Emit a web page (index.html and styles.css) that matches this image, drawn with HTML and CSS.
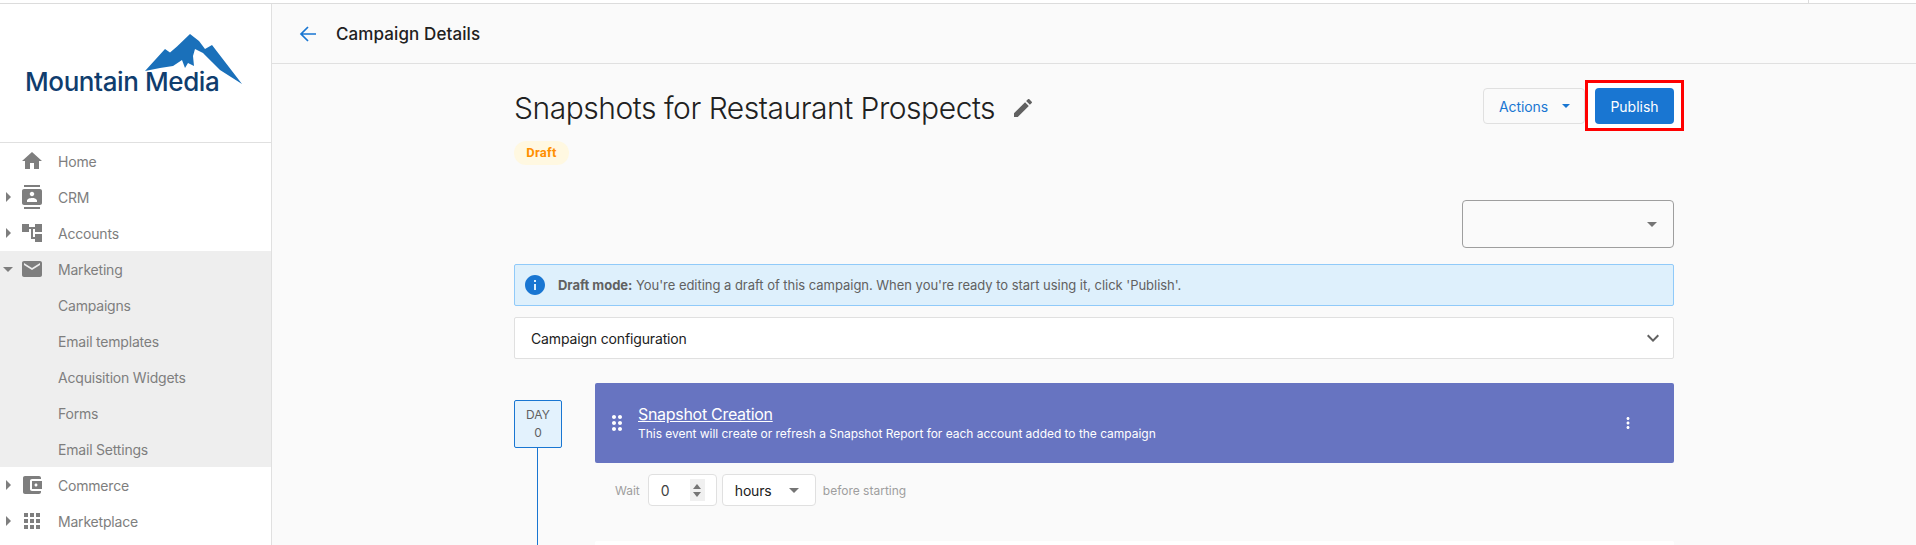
FILE: index.html
```html
<!DOCTYPE html>
<html lang="en">
<head>
<meta charset="utf-8">
<title>Campaign Details</title>
<link rel="stylesheet" href="styles.css">
</head>
<body>
<div class="topstrip"><span class="tick"></span></div>
<div class="shell">
  <aside class="sidebar">
    <div class="logo">
      <span class="logo-text">Mountain Media</span>
      <svg class="logo-mark" viewBox="0 0 97 50" aria-hidden="true"><path d="M0 37 20 15l5 3.500 7-6L45 0l9 7 6 8 7-4 10 13 20 26-22-14-8-8-9-9-8-4-2 7 1 10-6-3-3 5-3-8-9 6-13 2z"/></svg>
    </div>
    <nav class="nav">
      <a class="nav-item"><span class="caret none"></span><svg class="ic" viewBox="0 0 24 24"><path d="M10 20v-6h4v6h5v-8h3L12 3 2 12h3v8z"/></svg><span>Home</span></a>
      <a class="nav-item"><span class="caret"></span><svg class="ic" viewBox="0 0 24 24"><path d="M20 0H4v2h16V0zM4 24h16v-2H4v2zM20 4H4c-1.100 0-2 .9-2 2v12c0 1.100.9 2 2 2h16c1.100 0 2-.9 2-2V6c0-1.100-.9-2-2-2zm-8 2.750c1.240 0 2.250 1.010 2.250 2.250s-1.010 2.250-2.250 2.250S9.750 10.240 9.750 9 10.760 6.750 12 6.750zM17 17H7v-1.500c0-1.670 3.330-2.500 5-2.500s5 .83 5 2.500V17z"/></svg><span>CRM</span></a>
      <a class="nav-item"><span class="caret"></span><svg class="ic" viewBox="0 0 24 24"><path d="M22 11V3h-7v3H9V3H2v8h7V8h2v10h4v3h7v-8h-7v3h-2V8h2v3z"/></svg><span>Accounts</span></a>
      <div class="nav-group">
        <a class="nav-item"><span class="caret open"></span><svg class="ic" viewBox="0 0 24 24"><path d="M20 4H4c-1.100 0-1.990.9-1.990 2L2 18c0 1.100.9 2 2 2h16c1.100 0 2-.9 2-2V6c0-1.100-.9-2-2-2zm0 4-8 5-8-5V6l8 5 8-5v2z"/></svg><span>Marketing</span></a>
        <a class="nav-item sub">Campaigns</a>
        <a class="nav-item sub">Email templates</a>
        <a class="nav-item sub">Acquisition Widgets</a>
        <a class="nav-item sub">Forms</a>
        <a class="nav-item sub">Email Settings</a>
      </div>
      <a class="nav-item"><span class="caret"></span><svg class="ic" viewBox="0 0 24 24"><path d="M21 18v1c0 1.100-.9 2-2 2H5c-1.110 0-2-.9-2-2V5c0-1.100.89-2 2-2h14c1.100 0 2 .9 2 2v1h-9c-1.110 0-2 .9-2 2v8c0 1.100.89 2 2 2h9zm-9-2h10V8H12v8zm4-2.500c-.83 0-1.500-.67-1.500-1.500s.67-1.500 1.500-1.500 1.500.67 1.500 1.500-.67 1.500-1.500 1.500z"/></svg><span>Commerce</span></a>
      <a class="nav-item"><span class="caret"></span><svg class="ic" viewBox="0 0 24 24"><path d="M4 8h4V4H4v4zm6 12h4v-4h-4v4zm-6 0h4v-4H4v4zm0-6h4v-4H4v4zm6 0h4v-4h-4v4zm6-10v4h4V4h-4zm-6 4h4V4h-4v4zm6 6h4v-4h-4v4zm0 6h4v-4h-4v4z"/></svg><span>Marketplace</span></a>
    </nav>
  </aside>
  <main class="main">
    <header class="topbar">
      <svg class="back" viewBox="0 0 24 24"><path d="M20 12H5.500M12 5l-7 7 7 7"/></svg>
      <h2 class="page-name">Campaign Details</h2>
    </header>
    <div class="content">
      <div class="title-row">
        <div class="title-col">
          <div class="title-line">
            <h1 class="title">Snapshots for Restaurant Prospects</h1>
            <svg class="pencil" viewBox="0 0 24 24"><path d="M3 17.250V21h3.750L17.810 9.940l-3.750-3.750L3 17.250zM20.710 7.040c.39-.39.39-1.020 0-1.410l-2.340-2.340c-.39-.39-1.020-.39-1.410 0l-1.830 1.830 3.750 3.750 1.830-1.830z"/></svg>
          </div>
          <span class="pill">Draft</span>
        </div>
        <div class="actions">
          <button class="btn-actions">Actions<span class="mini-caret"></span></button>
          <div class="highlight"><button class="btn-publish">Publish</button></div>
        </div>
      </div>
      <div class="select-row"><div class="select"><span class="grey-caret"></span></div></div>
      <div class="alert">
        <svg class="info" viewBox="0 0 24 24"><path d="M12 2C6.480 2 2 6.480 2 12s4.480 10 10 10 10-4.480 10-10S17.520 2 12 2zm1 15h-2v-6h2v6zm0-8h-2V7h2v2z"/></svg>
        <p class="alert-text"><strong>Draft mode:</strong> You're editing a draft of this campaign. When you're ready to start using it, click 'Publish'.</p>
      </div>
      <div class="config">
        <span>Campaign configuration</span>
        <svg class="chev" viewBox="0 0 24 24"><path d="M16.590 8.590 12 13.170 7.410 8.590 6 10l6 6 6-6z"/></svg>
      </div>
      <div class="timeline">
        <div class="rail">
          <div class="day"><span>DAY</span><span>0</span></div>
          <div class="rail-line"></div>
        </div>
        <div class="steps">
          <div class="banner">
            <svg class="grip" viewBox="0 0 24 24"><path d="M11 18c0 1.100-.9 2-2 2s-2-.9-2-2 .9-2 2-2 2 .9 2 2zm-2-8c-1.100 0-2 .9-2 2s.9 2 2 2 2-.9 2-2-.9-2-2-2zm0-6c-1.100 0-2 .9-2 2s.9 2 2 2 2-.9 2-2-.9-2-2-2zm6 4c1.100 0 2-.9 2-2s-.9-2-2-2-2 .9-2 2 .9 2 2 2zm0 2c-1.100 0-2 .9-2 2s.9 2 2 2 2-.9 2-2-.9-2-2-2zm0 6c-1.100 0-2 .9-2 2s.9 2 2 2 2-.9 2-2-.9-2-2-2z"/></svg>
            <div class="banner-text">
              <a class="banner-title">Snapshot Creation</a>
              <p class="banner-sub">This event will create or refresh a Snapshot Report for each account added to the campaign</p>
            </div>
            <svg class="more" viewBox="0 0 24 24"><path d="M12 8c1.100 0 2-.9 2-2s-.9-2-2-2-2 .9-2 2 .9 2 2 2zm0 2c-1.100 0-2 .9-2 2s.9 2 2 2 2-.9 2-2-.9-2-2-2zm0 6c-1.100 0-2 .9-2 2s.9 2 2 2 2-.9 2-2-.9-2-2-2z"/></svg>
          </div>
          <div class="wait">
            <span>Wait</span>
            <div class="num"><span>0</span><span class="spin"><i class="up"></i><i class="down"></i></span></div>
            <div class="unit"><span>hours</span><span class="grey-caret"></span></div>
            <span>before starting</span>
          </div>
          <div class="next-card"></div>
        </div>
      </div>
    </div>
  </main>
</div>
</body>
</html>
```

FILE: styles.css
```css
* { box-sizing: border-box; }
html, body { margin: 0; height: 100%; overflow: hidden; }
body { font-family: Inter, "Liberation Sans", sans-serif; background: #fafafa; color: #212121; display: flex; flex-direction: column; }
h1, h2, p { margin: 0; font-weight: normal; }
button { font-family: inherit; cursor: pointer; }

.topstrip { height: 4px; flex: none; background: #fff; border-bottom: 1px solid #dcdcdc; display: flex; justify-content: flex-end; padding-right: 107px; }
.tick { width: 1px; height: 3px; background: #dcdcdc; }
.shell { flex: 1; display: flex; min-height: 0; }

.sidebar { width: 272px; flex: none; background: #fff; border-right: 1px solid #e0e0e0; overflow: hidden; }
.logo { height: 139px; border-bottom: 1px solid #e0e0e0; position: relative; padding: 60px 0 0 25px; }
.logo-text { font-family: Inter, sans-serif; font-weight: 500; font-size: 26px; line-height: 36px; letter-spacing: -0.4px; color: #0f3d6e; white-space: nowrap; }
.logo-mark { position: absolute; left: 145px; top: 30px; width: 97px; height: 50px; fill: #1a70ba; }

.nav-item { height: 36px; display: flex; align-items: center; font-size: 14px; letter-spacing: -0.2px; color: #7e7e7e; white-space: nowrap; }
.nav-group { background: #eee; }
.caret { width: 20px; flex: none; height: 0; margin-left: 0; position: relative; }
.caret::before { content: ""; position: absolute; left: 6px; top: -5px; border-left: 5px solid #7e7e7e; border-top: 5px solid transparent; border-bottom: 5px solid transparent; }
.caret.open::before { left: 3px; top: -2px; border-top: 5px solid #7e7e7e; border-left: 5px solid transparent; border-right: 5px solid transparent; border-bottom: 0; }
.caret.none::before { display: none; }
.ic { width: 24px; height: 24px; flex: none; fill: #7e7e7e; margin-right: 14px; }
.sub { padding-left: 58px; }

.main { flex: 1; min-width: 0; overflow: hidden; }
.topbar { height: 60px; border-bottom: 1px solid #e0e0e0; display: flex; align-items: center; padding-left: 24px; }
.back { width: 24px; height: 24px; fill: none; stroke: #1976d2; stroke-width: 1.700; margin-right: 16px; }
.page-name { font-size: 17px; font-weight: 500; letter-spacing: .1px; color: #212121; }

.content { width: 1160px; margin: 0 auto; padding-top: 16px; }
.title-row { display: flex; justify-content: space-between; align-items: flex-start; }
.title-col { padding-top: 8px; }
.title-line { display: flex; align-items: center; height: 40px; }
.title { font-size: 30px; font-weight: 300; line-height: 40px; letter-spacing: -.47px; color: #212121; white-space: nowrap; }
.pencil { width: 24px; height: 24px; fill: #616161; margin-left: 16px; }
.pill { display: inline-block; margin-top: 13px; height: 24px; line-height: 24px; width: 55px; text-align: center; border-radius: 12px; background: #fff8e1; color: #ff8f00; font-family: Roboto, sans-serif; font-weight: 700; font-size: 13px; letter-spacing: .3px; }

.actions { display: flex; align-items: flex-start; margin-right: -10px; }
.btn-actions { margin-top: 8px; width: 102px; height: 36px; background: #fafafa; border: 1px solid #e0e0e0; border-radius: 4px; color: #1976d2; font-size: 14px; font-weight: 400; letter-spacing: -.1px; padding: 0; display: flex; align-items: center; padding-left: 15px; }
.mini-caret { margin-left: 14px; border-top: 4px solid #1976d2; border-left: 4px solid transparent; border-right: 4px solid transparent; }
.highlight { border: 3px solid #f00; background: #fff; padding: 5px 7px 4px; }
.btn-publish { display: block; width: 79px; height: 36px; background: #1976d2; color: #fff; border: 0; border-radius: 4px; font-size: 14px; font-weight: 400; padding: 0; }

.select-row { display: flex; justify-content: flex-end; margin-top: 35px; }
.select { width: 212px; height: 48px; border: 1px solid #9e9e9e; border-radius: 4px; display: flex; align-items: center; justify-content: flex-end; padding-right: 16px; }
.grey-caret { border-top: 5px solid #757575; border-left: 5px solid transparent; border-right: 5px solid transparent; }

.alert { margin-top: 16px; height: 42px; background: #def0fc; border: 1px solid #90caf9; border-radius: 2px; display: flex; align-items: center; padding-left: 8px; }
.info { width: 24px; height: 24px; fill: #1976d2; flex: none; margin-right: 11px; }
.alert-text { font-size: 13px; letter-spacing: -.03px; color: #616161; white-space: nowrap; }
.alert-text strong { font-weight: 700; }

.config { margin-top: 11px; height: 42px; background: #fff; border: 1px solid #e0e0e0; border-radius: 2px; display: flex; align-items: center; justify-content: space-between; padding: 0 8px 0 16px; font-size: 14px; letter-spacing: -.15px; color: #212121; }
.chev { width: 24px; height: 24px; fill: #616161; }

.timeline { display: flex; margin-top: 24px; height: 162px; }
.rail { width: 81px; flex: none; padding-top: 17px; display: flex; flex-direction: column; align-items: flex-start; }
.day { width: 48px; height: 48px; background: #e3f2fd; border: 1px solid #1976d2; border-radius: 2px; display: flex; flex-direction: column; align-items: center; justify-content: center; font-size: 12px; line-height: 18px; color: #616161; }
.rail-line { width: 1px; flex: 1; margin-left: 23px; background: #1976d2; }
.steps { flex: 1; min-width: 0; }
.banner { height: 80px; background: #6774c1; border-radius: 2px; display: flex; align-items: center; padding-left: 10px; color: #fff; }
.grip { width: 24px; height: 24px; fill: #fff; flex: none; margin-right: 9px; }
.banner-text { flex: 1; }
.banner-title { display: block; font-size: 16px; line-height: 20px; letter-spacing: -.3px; text-decoration: underline; }
.banner-sub { font-size: 12px; line-height: 16px; margin-top: 2px; letter-spacing: -.03px; white-space: nowrap; }
.more { width: 18px; height: 18px; fill: #fff; margin-right: 37px; }

.wait { display: flex; align-items: center; height: 32px; margin-top: 11px; padding-left: 20px; font-size: 12px; color: #9e9e9e; }
.num { width: 69px; height: 32px; margin-left: 8px; background: #fff; border: 1px solid #e0e0e0; border-radius: 4px; display: flex; align-items: center; justify-content: space-between; padding: 0 12px; font-size: 14px; color: #424242; }
.spin { width: 15px; height: 22px; background: #f0f0f0; display: flex; flex-direction: column; align-items: center; justify-content: center; gap: 3px; margin-right: -1px; }
.spin i { display: block; border-left: 4px solid transparent; border-right: 4px solid transparent; }
.spin .up { border-bottom: 5px solid #757575; }
.spin .down { border-top: 5px solid #757575; }
.unit { width: 94px; height: 32px; margin: 0 7px 0 5px; background: #fff; border: 1px solid #e0e0e0; border-radius: 4px; display: flex; align-items: center; justify-content: space-between; padding: 0 16px 0 12px; font-size: 14px; letter-spacing: -.2px; color: #212121; }
.next-card { height: 4px; margin-top: 35px; background: #fff; border-radius: 2px 2px 0 0; }
```
